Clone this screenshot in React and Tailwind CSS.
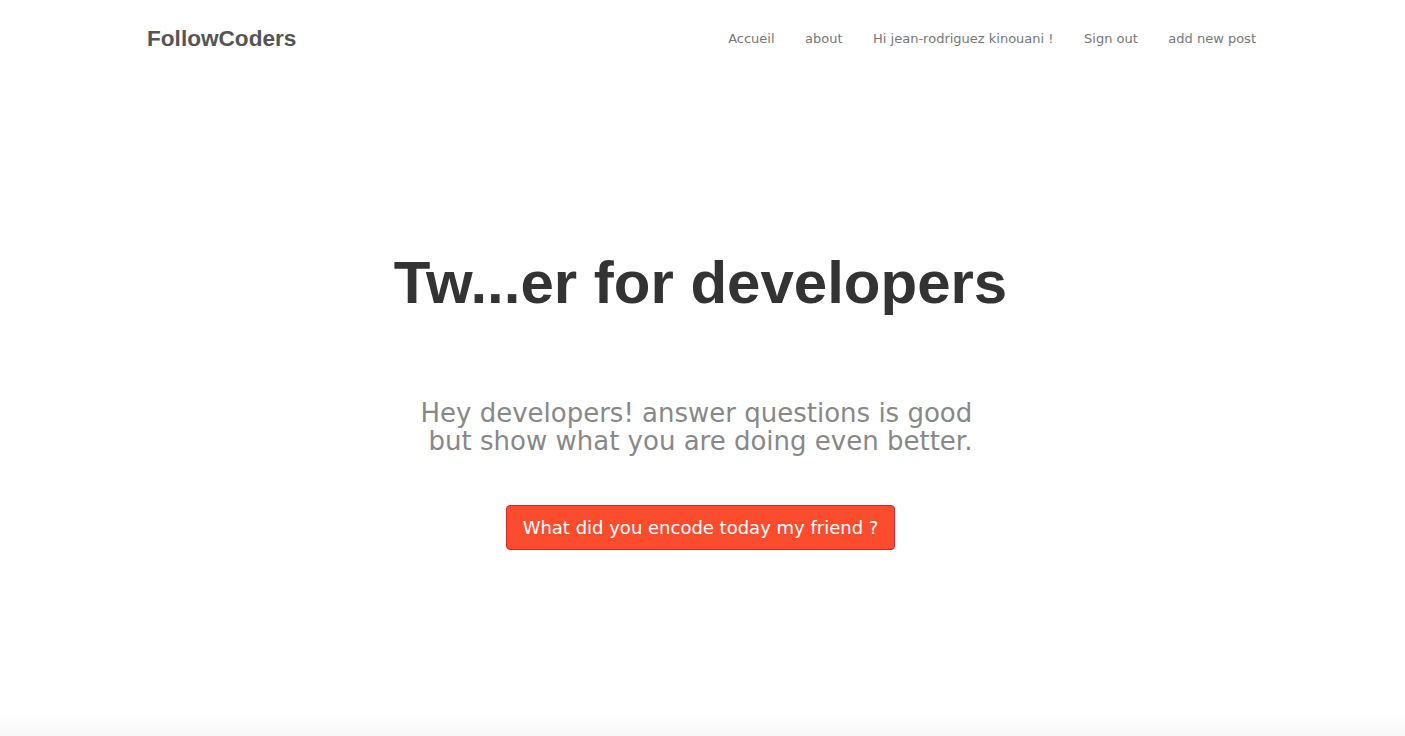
export default function App() {
  const links = ["Accueil", "about", "Hi jean-rodriguez kinouani !", "Sign out", "add new post"];

  return (
    <div className="min-h-[736px] bg-white flex flex-col">
      {/* navbar */}
      <header className="h-[76px] flex items-center justify-between pl-[147px] pr-[149px]">
        <a className="pt-[2px] text-[22.6px] font-bold text-[#555] font-['Liberation_Sans',Arial,sans-serif]">
          FollowCoders
        </a>
        <nav className="flex gap-[30.5px] pt-[2px] text-[13px] text-[#777] font-['DejaVu_Sans',Verdana,sans-serif]">
          {links.map((l) => (
            <a key={l}>{l}</a>
          ))}
        </nav>
      </header>

      {/* hero */}
      <main className="flex-1 flex flex-col items-center pr-[4px]">
        <h1 className="mt-[177px] text-[60px] leading-none font-bold text-[#333] font-['Liberation_Sans',Arial,sans-serif]">
          Tw...er for developers
        </h1>
        <p className="mt-[86px] text-center text-[26px] leading-[28px] text-[#888] font-['DejaVu_Sans',Verdana,sans-serif]">
          Hey developers! answer questions is good{"\u00a0"}
          <br />
          but show what you are doing even better.
        </p>
        <button className="mt-[50px] h-[45px] px-[16px] rounded-[4px] border border-[#e0202a] bg-[#fc4c2e] text-white text-[18px] font-['DejaVu_Sans',Verdana,sans-serif]">
          What did you encode today my friend ?
        </button>
      </main>

      <div className="h-[22px] bg-gradient-to-b from-white to-[#f7f7f7]" />
    </div>
  );
}
